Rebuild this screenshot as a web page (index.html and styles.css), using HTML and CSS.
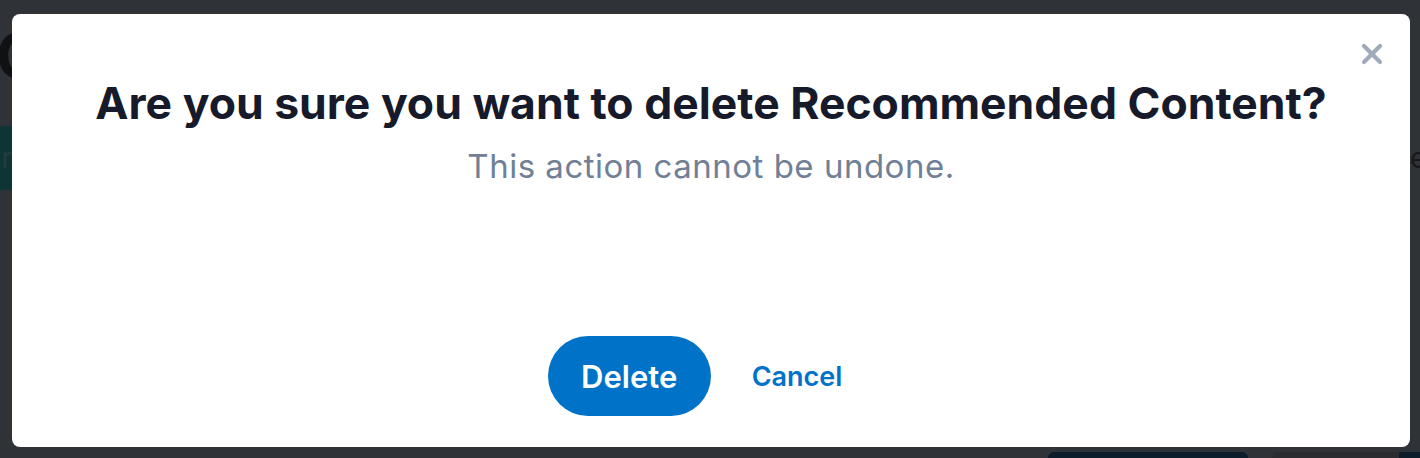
FILE: index.html
```html
<!DOCTYPE html>
<html lang="en">
<head>
<meta charset="utf-8">
<title>Delete Recommended Content</title>
<link rel="stylesheet" href="styles.css">
</head>
<body>
<div class="page">
  <h1 class="page-title">Content</h1>
  <div class="tabs">
    <span class="tab">Editor</span>
    <span class="tab-spacer"></span>
    <span class="tab tab-right">edit</span>
  </div>
  <div class="page-fill"></div>
  <div class="page-footer">
    <span class="ghost-btn ghost-navy"></span>
    <span class="ghost-btn ghost-gray"></span>
    <span class="ghost-btn ghost-edge"></span>
  </div>
</div>

<div class="overlay">
  <div class="modal" role="dialog" aria-modal="true">
    <button class="close" aria-label="Close">
      <svg width="22" height="22" viewBox="0 0 22 22"><path d="M3 3 L19 19 M19 3 L3 19" stroke="currentColor" stroke-width="4.2" stroke-linecap="round"/></svg>
    </button>
    <div class="modal-body">
      <h2 class="modal-title">Are you sure you want to delete Recommended Content?</h2>
      <p class="modal-text">This action cannot be undone.</p>
    </div>
    <div class="modal-actions">
      <button class="btn-delete">Delete</button>
      <button class="btn-cancel">Cancel</button>
    </div>
  </div>
</div>
</body>
</html>
```

FILE: styles.css
```css
* { box-sizing: border-box; }
html, body { margin: 0; height: 100%; }
body {
  background: #2f3236;
  font-family: Inter, "Noto Sans", sans-serif;
  overflow: hidden;
}

/* dimmed page behind the dialog */
.page {
  height: 458px;
  display: flex;
  flex-direction: column;
}
.page-title {
  margin: 20px 0 0 -4px;
  font-size: 62px;
  line-height: 72px;
  font-weight: 700;
  color: #0f1113;
}
.tabs {
  margin-top: 34px;
  height: 64px;
  display: flex;
  align-items: center;
}
.tab {
  background: #0f3436;
  height: 64px;
  width: 110px;
  margin-left: -98px;
  display: flex;
  align-items: center;
  justify-content: flex-end;
  font-size: 28px;
  color: #223d3f;
}
.tab-spacer { flex: 1; }
.tab-right {
  background: none;
  margin-left: 0;
  margin-right: -100px;
  color: #15181c;
  justify-content: flex-start;
}
.page-fill { flex: 1; }
.page-footer {
  height: 6px;
  display: flex;
}
.ghost-btn { display: block; height: 6px; border-radius: 8px 8px 0 0; }
.ghost-navy { background: #0b1c2b; width: 200px; margin-left: 1048px; }
.ghost-gray { background: #2a2c2f; width: 130px; margin-left: 24px; }
.ghost-edge { background: #0b1c2b; flex: 1; border-radius: 0; margin-left: -3px; }

/* dialog */
.overlay {
  position: fixed;
  inset: 0;
  padding: 14px 10px 11px 12px;
  display: flex;
}
.modal {
  position: relative;
  flex: 1;
  background: #ffffff;
  border-radius: 8px;
  display: flex;
  flex-direction: column;
  align-items: center;
  padding: 63px 20px 31px;
}
.close {
  position: absolute;
  top: 28px;
  right: 26px;
  width: 24px;
  height: 24px;
  padding: 0;
  border: 0;
  background: none;
  color: #a0aabb;
  display: flex;
  align-items: center;
  justify-content: center;
}
.modal-body {
  flex: 1;
  text-align: center;
}
.modal-title {
  margin: 0;
  font-size: 44.5px;
  line-height: 52px;
  font-weight: 700;
  color: #161a2a;
  letter-spacing: 0;
  white-space: nowrap;
}
.modal-text {
  margin: 17px 0 0;
  font-size: 33px;
  line-height: 40px;
  letter-spacing: 0.5px;
  color: #718096;
}
.modal-actions {
  display: flex;
  align-items: center;
  gap: 41px;
  padding-right: 32px;
}
.btn-delete {
  font-family: inherit;
  width: 163px;
  height: 80px;
  border: 0;
  border-radius: 40px;
  background: #0073c9;
  color: #ffffff;
  font-size: 31px;
  font-weight: 600;
}
.btn-cancel {
  font-family: inherit;
  border: 0;
  background: none;
  padding: 0;
  color: #0073c9;
  font-size: 27px;
  font-weight: 600;
}
```
